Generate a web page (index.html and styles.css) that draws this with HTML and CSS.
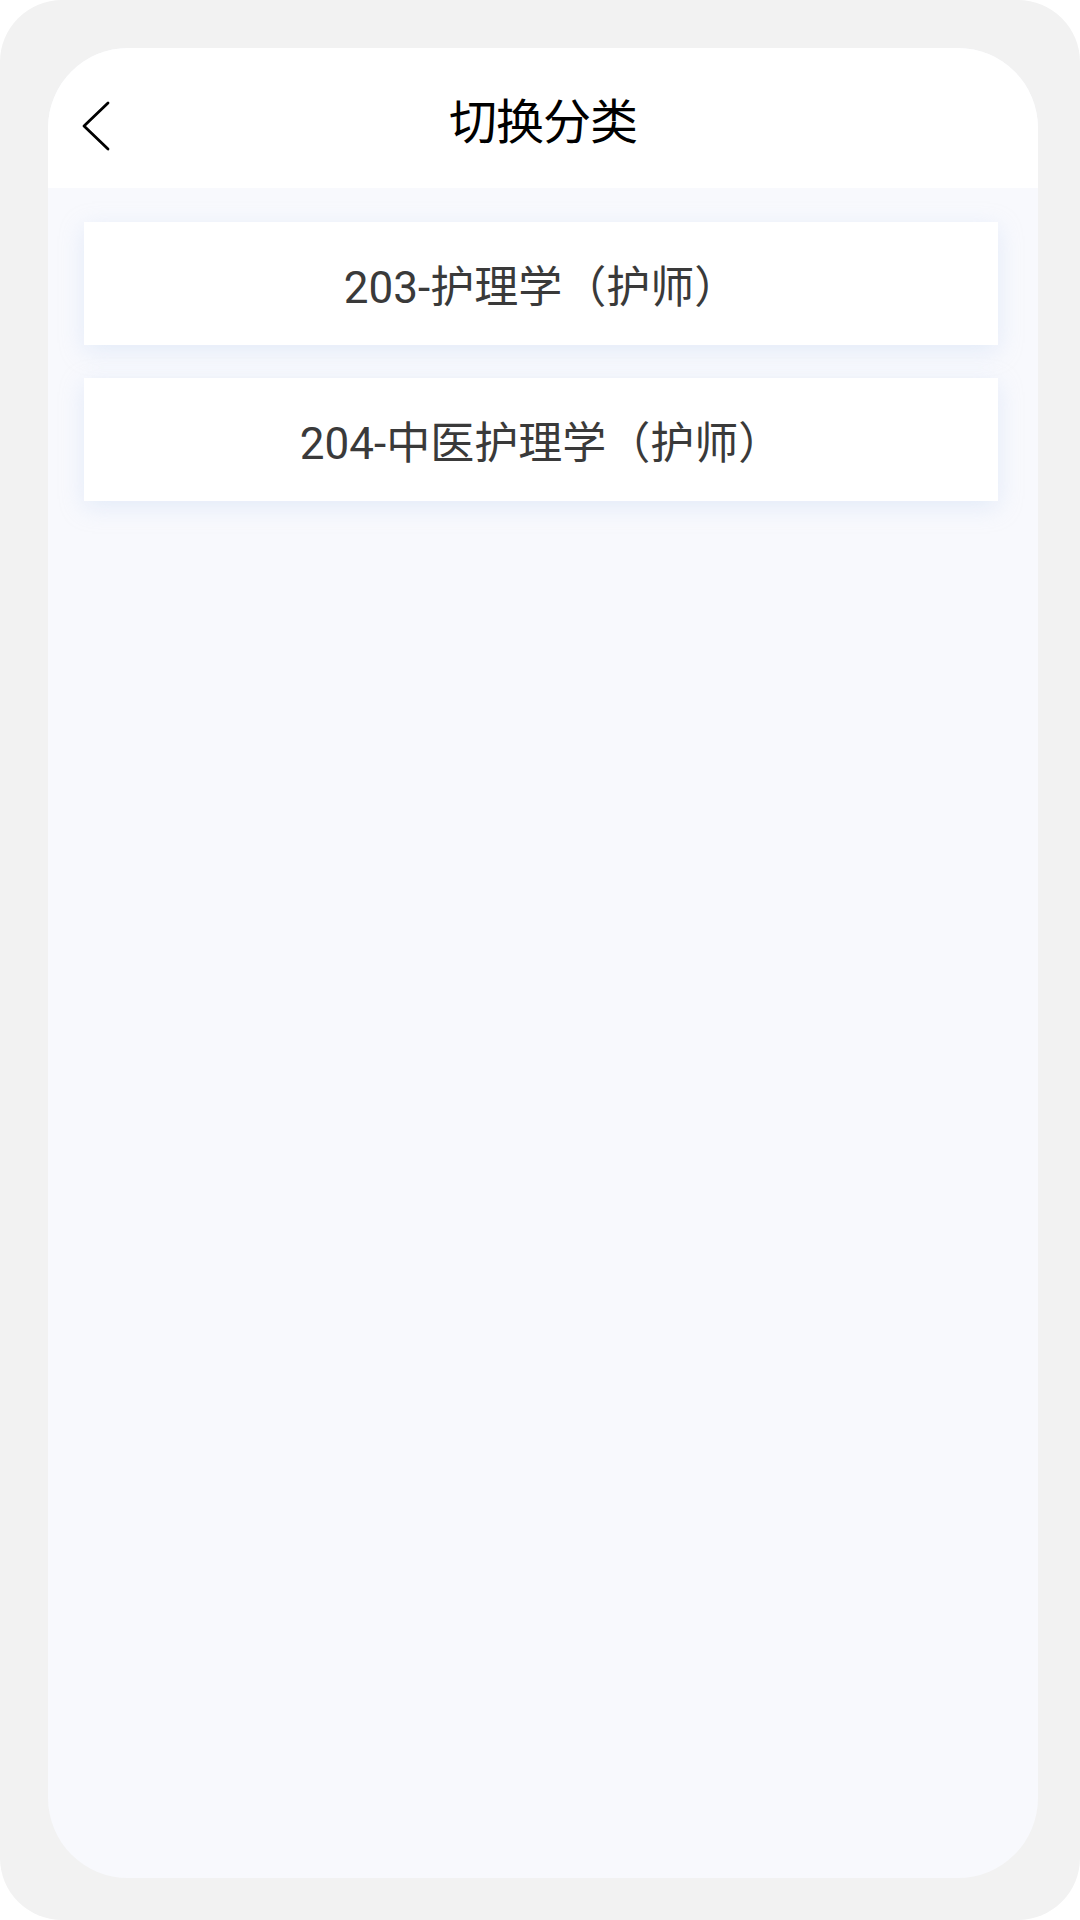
FILE: index.html
```html
<!DOCTYPE html>
<html lang="zh-CN">
<head>
<meta charset="utf-8">
<title>切换分类</title>
<link rel="stylesheet" href="styles.css">
</head>
<body>
<div class="frame">
  <div class="screen">
    <header class="header">
      <div class="back">
        <svg class="back-icon" width="32" height="52" viewBox="0 0 32 52" fill="none">
          <path d="M27 3 L3 26 L27 49" stroke="#000" stroke-width="2.8" stroke-linecap="round" stroke-linejoin="round"/>
        </svg>
      </div>
      <h1 class="title">切换分类</h1>
      <div class="spacer"></div>
    </header>
    <main class="list">
      <div class="card">203-护理学（护师）</div>
      <div class="card">204-中医护理学（护师）</div>
    </main>
  </div>
</div>
</body>
</html>
```
FILE: styles.css
```css
html, body {
  margin: 0;
  padding: 0;
  background: #ffffff;
}
.frame {
  width: 1080px;
  height: 1920px;
  box-sizing: border-box;
  padding: 48px 42px 42px 48px;
  background: #f2f2f2;
  border-radius: 62px;
}
.screen {
  height: 100%;
  background: #f8f9fd;
  border-radius: 80px;
  overflow: hidden;
  display: flex;
  flex-direction: column;
}
.header {
  height: 140px;
  flex: none;
  background: #ffffff;
  display: grid;
  grid-template-columns: 1fr auto 1fr;
  align-items: center;
}
.back {
  padding-left: 33px;
  display: flex;
  align-items: center;
  padding-top: 16px;
}
.back-icon {
  display: block;
}
.title {
  margin: 0;
  font-family: "Noto Sans CJK SC", "Noto Sans", sans-serif;
  font-weight: 400;
  font-size: 48px;
  line-height: 1;
  color: #000000;
  letter-spacing: -1px;
}
.list {
  display: flex;
  flex-direction: column;
  gap: 33px;
  padding: 34px 40px 0 36px;
}
.card {
  height: 123px;
  background: #ffffff;
  display: flex;
  align-items: center;
  justify-content: center;
  font-family: Roboto, "Noto Sans CJK SC", sans-serif;
  font-size: 44px;
  color: #3a3a3a;
  box-shadow: 0 6px 22px rgba(190, 208, 240, 0.35);
}
```
